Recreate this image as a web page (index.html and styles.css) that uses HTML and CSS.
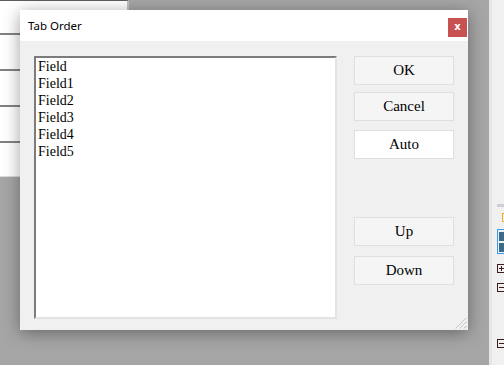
FILE: index.html
```html
<!DOCTYPE html>
<html>
<head>
<meta charset="utf-8">
<link rel="stylesheet" href="styles.css">
</head>
<body>
<div class="desk">
  <div class="bgpanel">
    <div class="row first"></div>
    <div class="row"></div>
    <div class="row"></div>
    <div class="row"></div>
  </div>
  <div class="strip">
    <div class="graybar"></div>
    <div class="folder"></div>
    <div class="selbox"><span class="sq"></span><span class="sq"></span></div>
    <div class="tbox plus"></div>
    <div class="tbox minus"></div>
    <div class="tbox minus far"></div>
  </div>
  <div class="dialog">
    <div class="titlebar">
      <span class="title">Tab Order</span>
      <span class="close">x</span>
    </div>
    <div class="body">
      <div class="list">
        <div class="item">Field</div>
        <div class="item">Field1</div>
        <div class="item">Field2</div>
        <div class="item">Field3</div>
        <div class="item">Field4</div>
        <div class="item">Field5</div>
      </div>
      <div class="buttons">
        <div class="btn">OK</div>
        <div class="btn cancel">Cancel</div>
        <div class="btn auto">Auto</div>
        <div class="btn up">Up</div>
        <div class="btn down">Down</div>
      </div>
    </div>
    <svg class="grip" width="12" height="12" viewBox="0 0 12 12">
      <g stroke-width="1">
        <line x1="11.5" y1="1" x2="1" y2="11.5" stroke="#a8a8a8"/>
        <line x1="11.5" y1="2" x2="2" y2="11.5" stroke="#ffffff"/>
        <line x1="11.5" y1="5" x2="5" y2="11.5" stroke="#a8a8a8"/>
        <line x1="11.5" y1="6" x2="6" y2="11.5" stroke="#ffffff"/>
        <line x1="11.5" y1="9" x2="9" y2="11.5" stroke="#a8a8a8"/>
      </g>
    </svg>
  </div>
</div>
</body>
</html>
```
FILE: styles.css
```css
html, body {
  margin: 0;
  padding: 0;
}
body {
  width: 504px;
  height: 365px;
  overflow: hidden;
  background: #a6a6a6;
}
.desk {
  position: relative;
  width: 504px;
  height: 365px;
  background: #a6a6a6;
}
.bgpanel {
  position: absolute;
  left: 0;
  top: 0;
  width: 127px;
  height: 175px;
  background: #ffffff;
  border-top: 1px solid #5e5e5e;
  border-bottom: 1px solid #dcdcdc;
  border-right: 2px solid #c4c4c4;
}
.row {
  height: 34px;
  border-bottom: 2px solid #838383;
}
.row.first {
  height: 32px;
}
.strip {
  position: absolute;
  left: 489px;
  top: 0;
  width: 15px;
  height: 365px;
  border-left: 3px solid #e6e6e6;
  background: #f0f0f0;
  padding-top: 204px;
  box-sizing: border-box;
  overflow: hidden;
}
.graybar {
  margin-left: 5px;
  width: 10px;
  height: 3px;
  background: #cfcfd8;
}
.folder {
  margin-top: 6px;
  margin-left: 10px;
  width: 6px;
  height: 7px;
  border: 1px solid #e0b040;
  background: #fff1c0;
}
.selbox {
  margin-top: 7px;
  margin-left: 5px;
  width: 10px;
  height: 25px;
  border: 1px solid #3a9af0;
  display: flex;
  flex-direction: column;
  gap: 2px;
  padding: 2px 0 0 1px;
  box-sizing: border-box;
}
.sq {
  display: block;
  width: 9px;
  height: 9px;
  background: #3c6c8c;
}
.tbox {
  margin-left: 5px;
  width: 7px;
  height: 7px;
  border: 1px solid #3a1c1c;
  position: relative;
}
.tbox.plus {
  margin-top: 10px;
}
.tbox.minus {
  margin-top: 10px;
}
.tbox.far {
  margin-top: 47px;
}
.tbox::before {
  content: "";
  position: absolute;
  left: 1px;
  top: 3px;
  width: 5px;
  height: 1px;
  background: #3a1c1c;
}
.tbox.plus::after {
  content: "";
  position: absolute;
  left: 3px;
  top: 1px;
  width: 1px;
  height: 5px;
  background: #3a1c1c;
}
.dialog {
  position: absolute;
  left: 20px;
  top: 10px;
  width: 448px;
  height: 320px;
  background: #f0f0f0;
  box-shadow: 0 3px 16px rgba(0, 0, 0, 0.38);
  display: flex;
  flex-direction: column;
}
.titlebar {
  height: 31px;
  background: #ffffff;
  display: flex;
  align-items: center;
  padding-left: 8px;
}
.title {
  font-family: "Noto Sans", "Open Sans", sans-serif;
  font-size: 11.5px;
  color: #000000;
}
.close {
  margin-left: auto;
  margin-right: 1px;
  align-self: flex-start;
  margin-top: 8px;
  width: 19px;
  height: 19px;
  background: #c85252;
  color: #ffffff;
  font-family: "DejaVu Sans", sans-serif;
  font-weight: bold;
  font-size: 10px;
  line-height: 18px;
  text-align: center;
}
.body {
  flex: 1;
  display: flex;
  padding: 15px 14px 11px 14px;
  gap: 17px;
}
.list {
  width: 303px;
  height: 263px;
  box-sizing: border-box;
  background: #ffffff;
  border-style: solid;
  border-width: 2px;
  border-color: #7c7c7c #e3e3e3 #e3e3e3 #7c7c7c;
  padding-left: 2px;
}
.item {
  font-family: "Liberation Serif", "Times New Roman", serif;
  font-size: 14px;
  line-height: 17px;
  color: #000000;
}
.buttons {
  width: 100px;
  display: flex;
  flex-direction: column;
}
.btn {
  height: 29px;
  box-sizing: border-box;
  border: 1px solid #dfdfdf;
  background: #f5f5f5;
  font-family: "Liberation Serif", "Times New Roman", serif;
  font-size: 15px;
  line-height: 27px;
  text-align: center;
  color: #000000;
}
.btn.cancel {
  margin-top: 7px;
}
.btn.auto {
  margin-top: 9px;
  background: #ffffff;
}
.btn.up {
  margin-top: 58px;
}
.btn.down {
  margin-top: 10px;
}
.grip {
  position: absolute;
  right: 1px;
  bottom: 1px;
}
```
